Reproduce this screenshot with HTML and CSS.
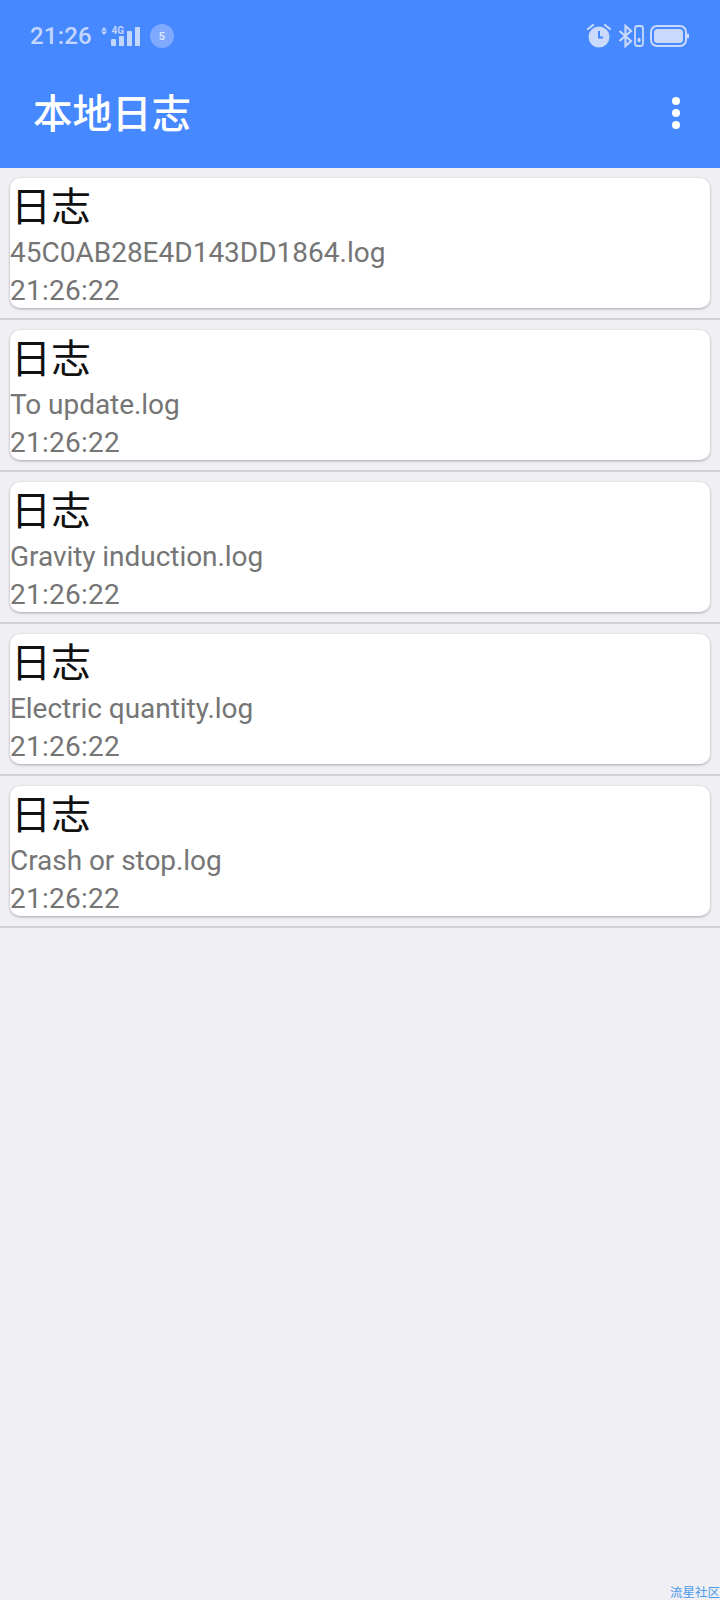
FILE: index.html
```html
<!DOCTYPE html>
<html lang="zh">
<head>
<meta charset="utf-8">
<title>本地日志</title>
<link rel="stylesheet" href="styles.css">
</head>
<body>
<header class="appbar">
  <div class="status">
    <div class="status-left">
      <span class="clock">21:26</span>
      <svg class="signal" width="40" height="24" viewBox="0 0 40 24">
        <path d="M1 6.500 4 3 7 6.500ZM1 7.500 4 11 7 7.500Z" fill="#c3d6ff"/>
        <text x="11.500" y="10" class="net">4G</text>
        <rect x="11" y="15" width="5" height="7" rx="1" fill="#c3d6ff"/>
        <rect x="19" y="12" width="5" height="10" rx="0.500" fill="#c3d6ff"/>
        <rect x="27" y="7" width="5" height="15" rx="0.500" fill="#c3d6ff"/>
        <rect x="35" y="3" width="5" height="19" rx="0.500" fill="#c3d6ff"/>
      </svg>
      <span class="badge">5</span>
    </div>
    <div class="status-right">
      <svg width="26" height="26" viewBox="0 0 26 26">
        <circle cx="13" cy="14" r="10.500" fill="#c9dafd"/>
        <path d="M13 8v6.500h4" fill="none" stroke="#4688ff" stroke-width="2"/>
        <path d="M2 6 7 2M24 6 19 2" fill="none" stroke="#c9dafd" stroke-width="2.200" stroke-linecap="round"/>
      </svg>
      <svg width="26" height="24" viewBox="0 0 26 24">
        <path d="M1.500 7 13 17 7.500 22V2L13 7 1.500 17" fill="none" stroke="#c9dafd" stroke-width="2.200"/>
        <rect x="17" y="2" width="8" height="20" rx="2.500" fill="none" stroke="#c9dafd" stroke-width="1.800"/>
        <rect x="19.500" y="14" width="3" height="4" rx="1" fill="#c9dafd"/>
      </svg>
      <svg width="40" height="22" viewBox="0 0 40 22">
        <rect x="1" y="1" width="35" height="20" rx="6" fill="none" stroke="#c9dafd" stroke-width="2"/>
        <rect x="4" y="4" width="29" height="14" rx="3.500" fill="#c9dafd"/>
        <rect x="37" y="8.500" width="2" height="5" rx="1" fill="#c9dafd"/>
      </svg>
    </div>
  </div>
  <div class="toolbar">
    <h1 class="title">本地日志</h1>
    <div class="more"><i></i><i></i><i></i></div>
  </div>
</header>
<main class="list">
  <section class="row"><div class="card"><div class="name">日志</div><div class="meta">45C0AB28E4D143DD1864.log</div><div class="meta time">21:26:22</div></div></section>
  <section class="row"><div class="card"><div class="name">日志</div><div class="meta file">To update.log</div><div class="meta time">21:26:22</div></div></section>
  <section class="row"><div class="card"><div class="name">日志</div><div class="meta file">Gravity induction.log</div><div class="meta time">21:26:22</div></div></section>
  <section class="row"><div class="card"><div class="name">日志</div><div class="meta file">Electric quantity.log</div><div class="meta time">21:26:22</div></div></section>
  <section class="row"><div class="card"><div class="name">日志</div><div class="meta file">Crash or stop.log</div><div class="meta time">21:26:22</div></div></section>
</main>
<footer class="mark">流星社区</footer>
</body>
</html>
```
FILE: styles.css
```css
* { box-sizing: border-box; }
html, body { margin: 0; height: 100%; }
body {
  width: 720px;
  height: 1600px;
  overflow: hidden;
  display: flex;
  flex-direction: column;
  background: #efeff4;
  font-family: Roboto, "Noto Sans CJK SC", sans-serif;
}
.appbar { height: 168px; background: #4688ff; flex: none; }
.status {
  height: 72px;
  padding: 0 30px;
  display: flex;
  justify-content: space-between;
  align-items: center;
}
.status-left, .status-right { display: flex; align-items: center; }
.status-right { gap: 6px; }
.clock { width: 62px; font-size: 24px; font-weight: 500; letter-spacing: 0.2px; color: #c3d6ff; margin-right: 8px; white-space: nowrap; }
.signal { margin-right: 10px; }
.net { font: 700 10px Roboto, sans-serif; fill: #c3d6ff; }
.badge {
  width: 24px;
  height: 24px;
  border-radius: 50%;
  background: #7ea9ff;
  color: #dbe6ff;
  font-size: 11px;
  font-weight: 700;
  display: flex;
  align-items: center;
  justify-content: center;
}
.toolbar {
  height: 84px;
  padding: 2px 40px 0 33px;
  display: flex;
  justify-content: space-between;
  align-items: center;
}
.title {
  margin: 0;
  font-size: 39.500px;
  font-weight: 500;
  color: #fff;
  line-height: 1;
}
.more { display: flex; flex-direction: column; gap: 4px; margin-top: -4px; }
.more i { width: 8px; height: 8px; border-radius: 50%; background: #fff; display: block; }
.list { flex: none; }
.row {
  height: 152px;
  padding: 10px;
  border-bottom: 2px solid #d2d2d6;
}
.card {
  height: 130px;
  background: #fff;
  border-radius: 10px;
  box-shadow: 0 1px 3px rgba(0, 0, 0, 0.3);
  overflow: hidden;
}
.name {
  height: 56px;
  padding: 2px 0 0 1px;
  font-size: 40px;
  line-height: 56px;
  color: #111;
}
.meta {
  height: 38px;
  font-size: 28px;
  line-height: 38px;
  color: #757575;
}
.file { letter-spacing: -0.05px; }
.time { letter-spacing: 0.25px; }
.mark {
  margin-top: auto;
  height: 14px;
  text-align: right;
  font-size: 12.500px;
  line-height: 14px;
  color: #4a9ae8;
}
```
